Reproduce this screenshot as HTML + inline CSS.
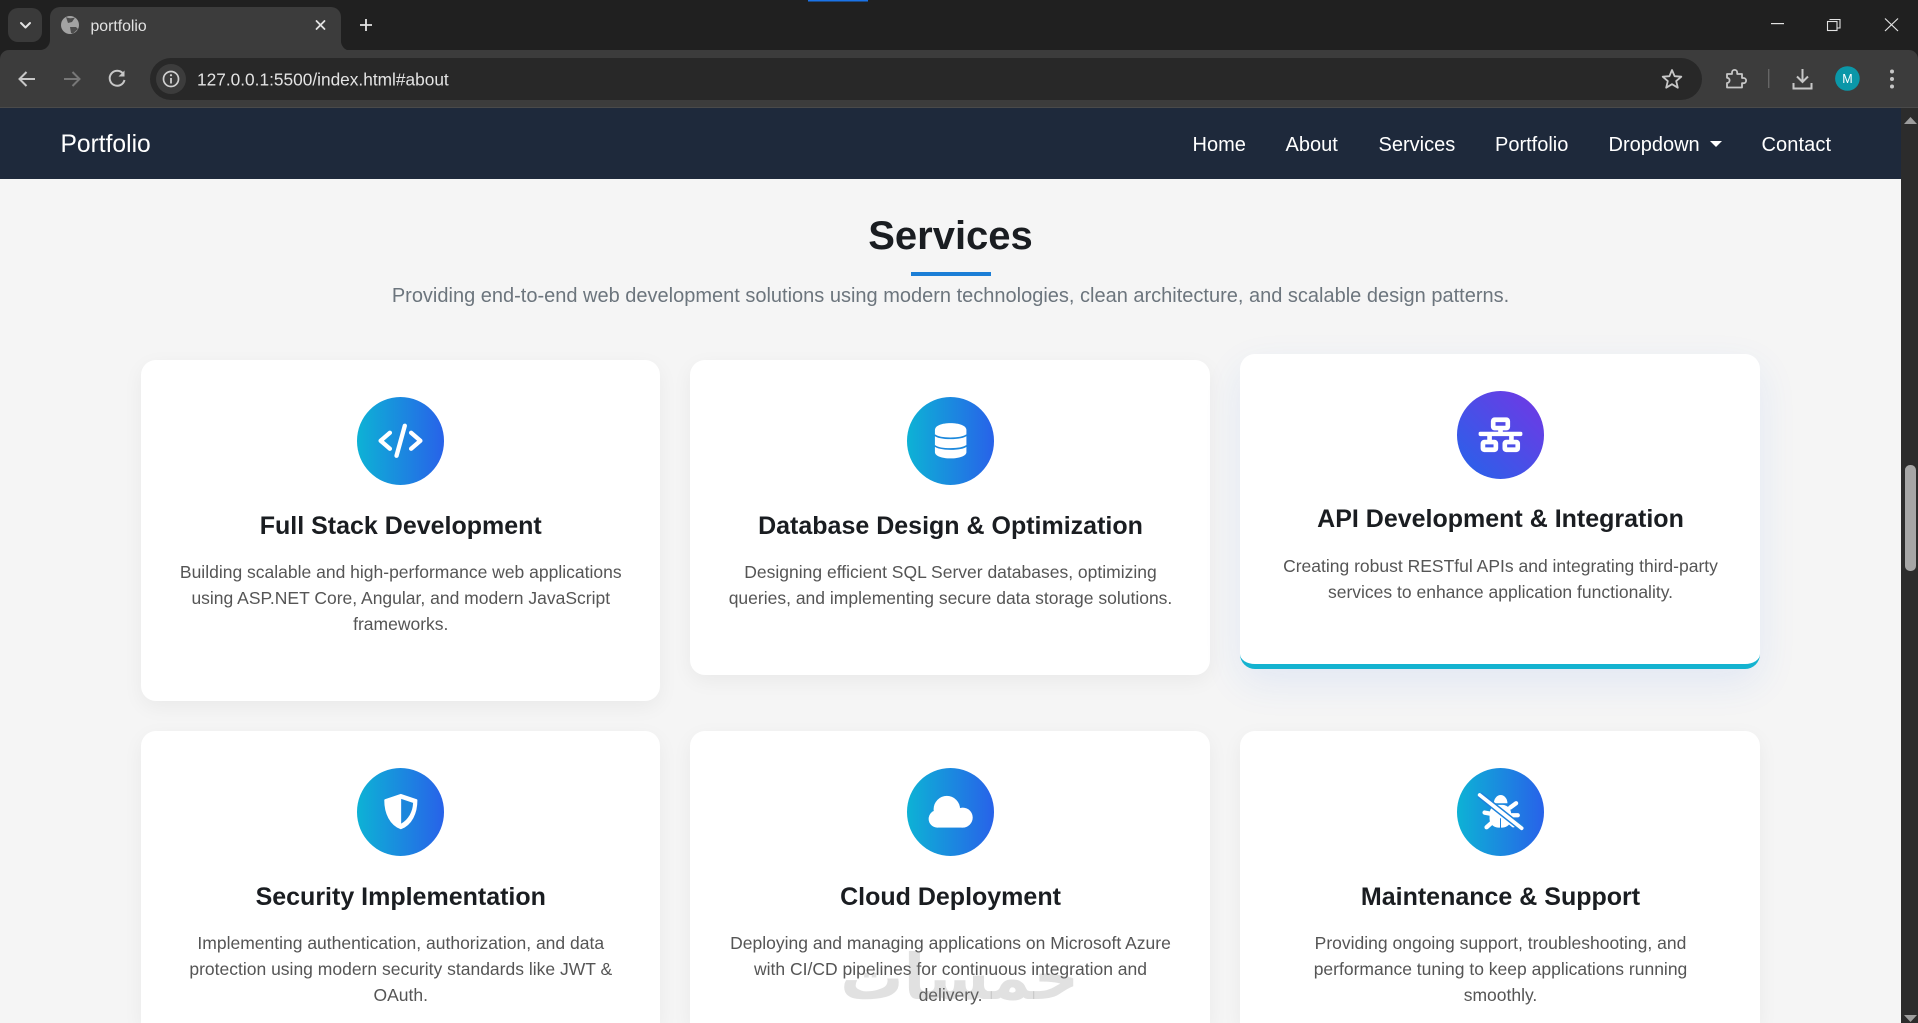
<!DOCTYPE html>
<html lang="en">
<head>
<meta charset="utf-8">
<title>portfolio</title>
<style>
html,body{margin:0;padding:0;width:1918px;height:1023px;overflow:hidden;background:#f5f5f5;font-family:"Liberation Sans",Arial,sans-serif}
body{position:relative}
.abs{position:absolute;white-space:nowrap}
#chrome{position:absolute;left:0;top:0;width:1918px;height:1023px;z-index:5;pointer-events:none}
#nav{position:absolute;left:0;top:108px;width:1901px;height:71px;background:#1e293b}
.nl{position:absolute;top:24px;line-height:26px;font-size:20px;color:#fff;white-space:nowrap}
.card{position:absolute;width:520px;background:#fff;border-radius:15px;box-shadow:0 6px 20px rgba(0,0,0,.05);box-sizing:border-box}
.card .ic{position:absolute;left:217px;top:37.5px;width:87px;height:87.5px;border-radius:50%;background:linear-gradient(90deg,#0db2d5,#2862e9)}
.card .ic svg{position:absolute;left:0;top:0;width:87px;height:87.5px}
.card h3{position:absolute;left:.5px;width:100%;top:150.5px;margin:0;line-height:30px;font-size:25px;font-weight:700;color:#1a1d21;text-align:center;white-space:nowrap}
.card p{position:absolute;left:.5px;width:100%;top:199.5px;margin:0;line-height:26px;font-size:17.5px;color:#555;text-align:center;white-space:nowrap}
.r1 h3{top:151.5px}
.r2 .ic{top:37px}
.r2 p{top:198.5px}
.hov{box-shadow:0 14px 40px rgba(37,99,235,.09);border-bottom:5.5px solid #14b3d0}
.hov .ic{top:37px;background:linear-gradient(45deg,#2464ea,#7436e4)}
.hov h3{top:150px}
.hov p{top:198.5px}
</style>
</head>
<body>

<div id="nav">
  <div class="abs" style="left:60.5px;top:22px;line-height:30px;font-size:24.6px;color:#fff">Portfolio</div>
  <div class="nl" style="left:1192.5px">Home</div>
  <div class="nl" style="left:1285.5px">About</div>
  <div class="nl" style="left:1378.5px">Services</div>
  <div class="nl" style="left:1495px">Portfolio</div>
  <div class="nl" style="left:1608.5px">Dropdown</div>
  <div style="position:absolute;left:1710px;top:33px;width:0;height:0;border-left:6px solid transparent;border-right:6px solid transparent;border-top:6px solid #fff"></div>
  <div class="nl" style="left:1761.5px;letter-spacing:.1px">Contact</div>
</div>

<div class="abs" style="left:0;width:1901px;top:213px;line-height:46px;font-size:40px;font-weight:700;color:#1a1d21;text-align:center">Services</div>
<div class="abs" style="left:911px;top:272px;width:80px;height:4px;background:#1c7ed6"></div>
<div class="abs" style="left:0;width:1901px;top:282px;line-height:28px;font-size:20px;color:#6c757d;text-align:center">Providing end-to-end web development solutions using modern technologies, clean architecture, and scalable design patterns.</div>

<!-- Row 1 -->
<div class="card r1" style="left:140.5px;top:359.5px;height:341.5px;width:519.5px">
  <div class="ic" style="left:216.5px"><svg viewBox="-131.25 -131.25 262.5 262.5" preserveAspectRatio="none"><g fill="none" stroke="#fff" stroke-width="13" stroke-linecap="round" stroke-linejoin="round"><path d="M-32 -24 L-60 0 L-32 24"/><path d="M32 -24 L60 0 L32 24"/><path d="M13 -45 L-12 45"/></g></svg></div>
  <h3>Full Stack Development</h3>
  <p>Building scalable and high-performance web applications<br>using ASP.NET Core, Angular, and modern JavaScript<br>frameworks.</p>
</div>

<div class="card r1" style="left:690px;top:359.5px;height:315.5px">
  <div class="ic"><svg viewBox="-131.25 -131.25 262.5 262.5" preserveAspectRatio="none"><path fill="#fff" d="M-47 -32 C-47 -46 -25 -53 0 -53 C25 -53 48 -46 48 -32 V34 C48 46 25 53 0 53 C-25 53 -47 46 -47 34 Z"/><path fill="none" stroke="#1b88dc" stroke-width="5" d="M-48 -17 C-30 -4 30 -4 49 -17"/><path fill="none" stroke="#1b88dc" stroke-width="5" d="M-48 15 C-30 28 30 28 49 15"/></svg></div>
  <h3>Database Design &amp; Optimization</h3>
  <p>Designing efficient SQL Server databases, optimizing<br>queries, and implementing secure data storage solutions.</p>
</div>

<div class="card hov" style="left:1240px;top:354px;height:314.5px">
  <div class="ic"><svg viewBox="-131.25 -131.25 262.5 262.5" preserveAspectRatio="none"><g transform="translate(-211 -164)"><g fill="none" stroke="#fff" stroke-width="14"><rect x="189" y="119" width="44" height="25" rx="4"/><rect x="158" y="186" width="39" height="23" rx="4"/><rect x="224" y="186" width="39" height="23" rx="4"/></g><g fill="#fff"><rect x="145" y="155" width="132" height="13" rx="5"/><rect x="204" y="145" width="14" height="12"/><rect x="171" y="167" width="14" height="14"/><rect x="237" y="167" width="14" height="14"/></g></g></svg></div>
  <h3>API Development &amp; Integration</h3>
  <p>Creating robust RESTful APIs and integrating third-party<br>services to enhance application functionality.</p>
</div>

<!-- Row 2 -->
<div class="card r2" style="left:140.5px;top:731px;height:292px;width:519.5px;border-radius:15px 15px 0 0">
  <div class="ic" style="left:216.5px"><svg viewBox="-131.25 -131.25 262.5 262.5" preserveAspectRatio="none"><g transform="translate(-181 -185.5)"><path fill="#fff" stroke="#fff" stroke-width="6" stroke-linejoin="round" d="M182 135 L229 151 C229 190 213 223 182 235 C151 223 135 190 135 151 Z"/><path fill="#1c86dc" d="M183 147 L219 159 C218 185 205 209 183 221 Z"/></g></svg></div>
  <h3>Security Implementation</h3>
  <p>Implementing authentication, authorization, and data<br>protection using modern security standards like JWT &amp;<br>OAuth.</p>
</div>

<div class="card r2" style="left:690px;top:731px;height:292px;border-radius:15px 15px 0 0">
  <div class="ic"><svg viewBox="-131.25 -131.25 262.5 262.5" preserveAspectRatio="none"><g transform="translate(-181 -185.5)" fill="#fff"><circle cx="170" cy="178" r="40"/><circle cx="218" cy="203" r="30"/><circle cx="141" cy="207" r="26"/><rect x="141" y="185" width="77" height="48"/></g></svg></div>
  <h3>Cloud Deployment</h3>
  <p>Deploying and managing applications on Microsoft Azure<br>with CI/CD pipelines for continuous integration and<br>delivery.</p>
</div>

<div class="card r2" style="left:1240px;top:731px;height:292px;border-radius:15px 15px 0 0">
  <div class="ic"><svg viewBox="-131.25 -131.25 262.5 262.5" preserveAspectRatio="none"><g transform="translate(-211 -185.5)"><path fill="#fff" d="M191 160 A20 24 0 0 1 232 160 Z"/><rect x="178" y="165" width="65" height="68" rx="26" fill="#fff"/><g stroke="#fff" stroke-width="13" stroke-linecap="round" fill="none"><path d="M240 173 L258 160"/><path d="M245 196 L263 196"/><path d="M163 188 L184 192"/><path d="M169 232 L188 215"/><path d="M250 226 L236 215"/></g><path d="M211 205 V236" stroke="#1d82dc" stroke-width="3"/><path d="M148 135 L275 235" stroke="#1d82dc" stroke-width="20"/><path d="M148 135 L275 235" stroke="#fff" stroke-width="11" stroke-linecap="round"/></g></svg></div>
  <h3>Maintenance &amp; Support</h3>
  <p>Providing ongoing support, troubleshooting, and<br>performance tuning to keep applications running<br>smoothly.</p>
</div>

<!-- Watermark -->
<div class="abs" dir="rtl" style="left:849px;width:230px;top:933px;line-height:90px;font-family:'DejaVu Sans',sans-serif;font-weight:700;font-size:63px;color:rgba(130,130,130,.24);text-align:center;z-index:4">خمسات</div>

<!-- Browser chrome -->
<svg id="chrome" viewBox="0 0 1918 1023">
  <rect x="0" y="0" width="1918" height="50" fill="#202020"/>
  <rect x="808" y="0" width="60" height="1.5" fill="#1a73e8"/>
  <rect x="0" y="50" width="1918" height="20" fill="#202020"/>
  <rect x="0" y="50" width="1918" height="58" rx="9" fill="#3c3c3c"/>
  <rect x="0" y="60" width="1918" height="48" fill="#3c3c3c"/>
  <rect x="0" y="107" width="1918" height="1" fill="#4a4a4a"/>
  <rect x="8" y="8" width="34" height="34" rx="10" fill="#3a3a3a"/>
  <path d="M21 23 L25.5 27.5 L30 23" fill="none" stroke="#e3e3e3" stroke-width="2" stroke-linecap="round" stroke-linejoin="round"/>
  <path d="M40 50 a10 10 0 0 0 10 -10 V17 a10 10 0 0 1 10 -10 H331 a10 10 0 0 1 10 10 V40 a10 10 0 0 0 14 10 Z" fill="#3c3c3c"/>
  <circle cx="70" cy="25" r="9" fill="#a3a3a3"/>
  <path d="M66 17 C69 19 73 18 75 17.5 L72 22 L68 23 Z M70 27 L76 27 L78 29 L73 33.5 L71 33 Z" fill="#4d4d4d"/>
  <text x="90.5" y="31" font-family="'Liberation Sans',sans-serif" font-size="15.8" fill="#e3e3e3">portfolio</text>
  <path d="M316.5 21 L324.5 29 M324.5 21 L316.5 29" stroke="#e3e3e3" stroke-width="1.8" stroke-linecap="round"/>
  <path d="M366 19 V31 M360 25 H372" stroke="#e3e3e3" stroke-width="1.8"/>
  <!-- nav buttons -->
  <path d="M35 79 H20 M26.5 72 L19.5 79 L26.5 86" fill="none" stroke="#c7c7c7" stroke-width="2"/>
  <path d="M64 79 H79 M72.5 72 L79.5 79 L72.5 86" fill="none" stroke="#777" stroke-width="2"/>
  <path d="M123 73.5 A7.5 7.5 0 1 0 124.5 80" fill="none" stroke="#c7c7c7" stroke-width="2"/>
  <path d="M124.5 70.5 V76.5 H118.5 Z" fill="#c7c7c7"/>
  <!-- omnibox -->
  <rect x="150" y="58" width="1552" height="42" rx="21" fill="#282828"/>
  <rect x="156" y="64" width="30" height="30" rx="15" fill="#3c3c3c"/>
  <circle cx="171" cy="79" r="7.5" fill="none" stroke="#d0d0d0" stroke-width="1.7"/>
  <path d="M171 78 V83.5" stroke="#d0d0d0" stroke-width="1.8"/>
  <circle cx="171" cy="75.2" r="1.1" fill="#d0d0d0"/>
  <text x="197" y="85.5" font-family="'Liberation Sans',sans-serif" font-size="17.3" fill="#e3e3e3">127.0.0.1:5500/index.html#about</text>
  <path d="M1672 70 L1674.6 76.2 L1681.3 76.7 L1676.2 81.1 L1677.8 87.7 L1672 84.2 L1666.2 87.7 L1667.8 81.1 L1662.7 76.7 L1669.4 76.2 Z" fill="none" stroke="#c7c7c7" stroke-width="1.8" stroke-linejoin="round"/>
  <!-- right toolbar -->
  <path d="M1727 74 H1732 V72.5 a2.6 2.6 0 0 1 5.2 0 V74 H1742 V78 H1743.5 a2.6 2.6 0 0 1 0 5.2 H1742 V87.5 H1727 V83 a2.6 2.6 0 0 0 0 -5.2 Z" fill="none" stroke="#c7c7c7" stroke-width="1.8" stroke-linejoin="round"/>
  <rect x="1768" y="69" width="1.4" height="19" fill="#666"/>
  <path d="M1802.5 69 V81 M1797 76.5 L1802.5 82 L1808 76.5" fill="none" stroke="#c7c7c7" stroke-width="2"/>
  <path d="M1793.5 83 V88.5 H1811.5 V83" fill="none" stroke="#c7c7c7" stroke-width="2"/>
  <circle cx="1847.4" cy="78.5" r="12.3" fill="#0b97a8"/>
  <text x="1847.4" y="83" text-anchor="middle" font-family="'Liberation Sans',sans-serif" font-size="12.5" fill="#fff">M</text>
  <circle cx="1892" cy="71.5" r="2" fill="#c7c7c7"/><circle cx="1892" cy="79" r="2" fill="#c7c7c7"/><circle cx="1892" cy="86.5" r="2" fill="#c7c7c7"/>
  <!-- window controls -->
  <rect x="1771" y="23" width="13" height="1.2" fill="#e3e3e3"/>
  <path d="M1830 20 V19.5 H1840 V28 H1837.5" fill="none" stroke="#e3e3e3" stroke-width="1.1"/>
  <rect x="1827.5" y="21.5" width="9.5" height="9" fill="none" stroke="#e3e3e3" stroke-width="1.1"/>
  <path d="M1885 18.5 L1898 31 M1898 18.5 L1885 31" stroke="#e3e3e3" stroke-width="1.2"/>
  <!-- scrollbar -->
  <rect x="1901" y="108" width="17" height="915" fill="#2c2c2c"/>
  <path d="M1904 124 L1910.5 117 L1917 124 Z" fill="#9d9d9d"/>
  <path d="M1904 1015 L1910.5 1022 L1917 1015 Z" fill="#9d9d9d"/>
  <rect x="1905" y="465" width="11" height="106" rx="5" fill="#a6a6a6"/>
</svg>

</body>
</html>
